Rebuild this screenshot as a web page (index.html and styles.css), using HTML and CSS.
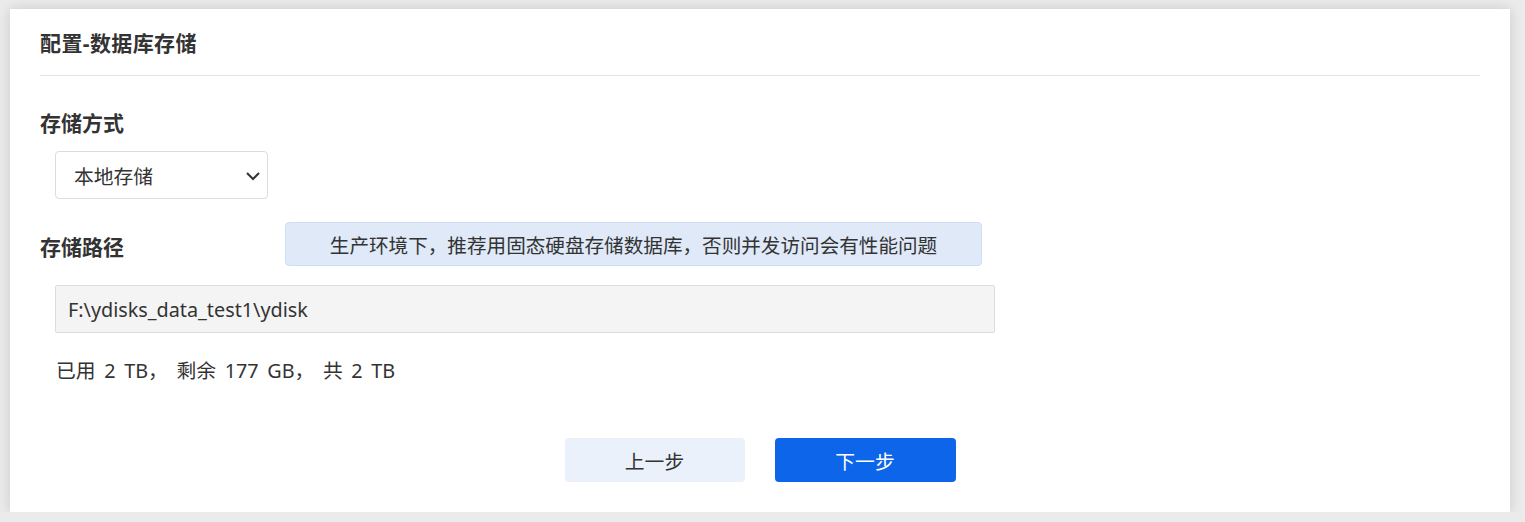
FILE: index.html
```
<!DOCTYPE html>
<html lang="zh-CN">
<head>
<meta charset="utf-8">
<title>配置-数据库存储</title>
<link rel="stylesheet" href="styles.css">
</head>
<body>
<div class="card">
  <div class="header">配置-数据库存储</div>
  <div class="label label-first">存储方式</div>
  <div class="select">
    <span>本地存储</span>
    <svg class="chev" width="16" height="10" viewBox="0 0 16 10"><path d="M2 2 L8 8 L14 2" fill="none" stroke="#333" stroke-width="2"/></svg>
  </div>
  <div class="row">
    <div class="label label-row">存储路径</div>
    <div class="hint">生产环境下，推荐用固态硬盘存储数据库，否则并发访问会有性能问题</div>
  </div>
  <div class="path">F:\ydisks_data_test1\ydisk</div>
  <div class="usage">已用 2 TB， 剩余 177 GB， 共 2 TB</div>
  <div class="actions">
    <button class="btn btn-prev">上一步</button>
    <button class="btn btn-next">下一步</button>
  </div>
</div>
</body>
</html>
```
FILE: styles.css
```
* { box-sizing: border-box; }
html, body { margin: 0; }
body {
  background: #ebebeb;
  padding: 9px 0 0 10px;
  font-family: "Noto Sans", "Noto Sans CJK SC", sans-serif;
  color: #333;
}
.card {
  width: 1500px;
  height: 503px;
  background: #fff;
  box-shadow: 0 0 12px rgba(0,0,0,0.14);
  padding: 21px 30px 30px 30px;
  display: flex;
  flex-direction: column;
}
.header {
  font-size: 21px;
  font-weight: 700;
  line-height: 26px;
  letter-spacing: 0.4px;
  padding-bottom: 19px;
  border-bottom: 1px solid #e4e4e4;
}
.label {
  font-size: 21px;
  font-weight: 700;
  line-height: 26px;
}
.label-first { margin-top: 34px; }
.select {
  margin-top: 15px;
  margin-left: 15px;
  width: 213px;
  height: 48px;
  border: 1px solid #dcdcdc;
  border-radius: 4px;
  display: flex;
  align-items: center;
  justify-content: space-between;
  padding: 0 6px 0 18px;
  font-size: 19.8px;
}
.chev { margin-top: 1px; }
.row {
  margin-top: 23px;
  display: flex;
  align-items: center;
}
.label-row { width: 245px; padding-top: 6px; }
.hint {
  width: 697px;
  height: 44px;
  background: #dfe9f8;
  border: 1px solid #cddff8;
  border-radius: 4px;
  display: flex;
  align-items: center;
  justify-content: center;
  font-size: 19.6px;
}
.path {
  margin-top: 19px;
  margin-left: 15px;
  width: 940px;
  height: 48px;
  background: #f4f4f4;
  border: 1px solid #dcdcdc;
  border-radius: 2px;
  display: flex;
  align-items: center;
  padding-left: 12px;
  font-size: 19.8px;
}
.usage {
  margin-top: 25px;
  margin-left: 16px;
  font-size: 19.8px;
  line-height: 26px;
  word-spacing: 3.5px;
}
.actions {
  margin-top: 54px;
  display: flex;
  justify-content: center;
  gap: 30px;
}
.btn {
  width: 180px;
  height: 44px;
  border: none;
  border-radius: 4px;
  font-family: inherit;
  font-size: 19.8px;
}
.btn-prev { background: #ebf1fa; color: #333; }
.btn-next { background: #0d66ea; color: #fff; width: 181px; }
```
